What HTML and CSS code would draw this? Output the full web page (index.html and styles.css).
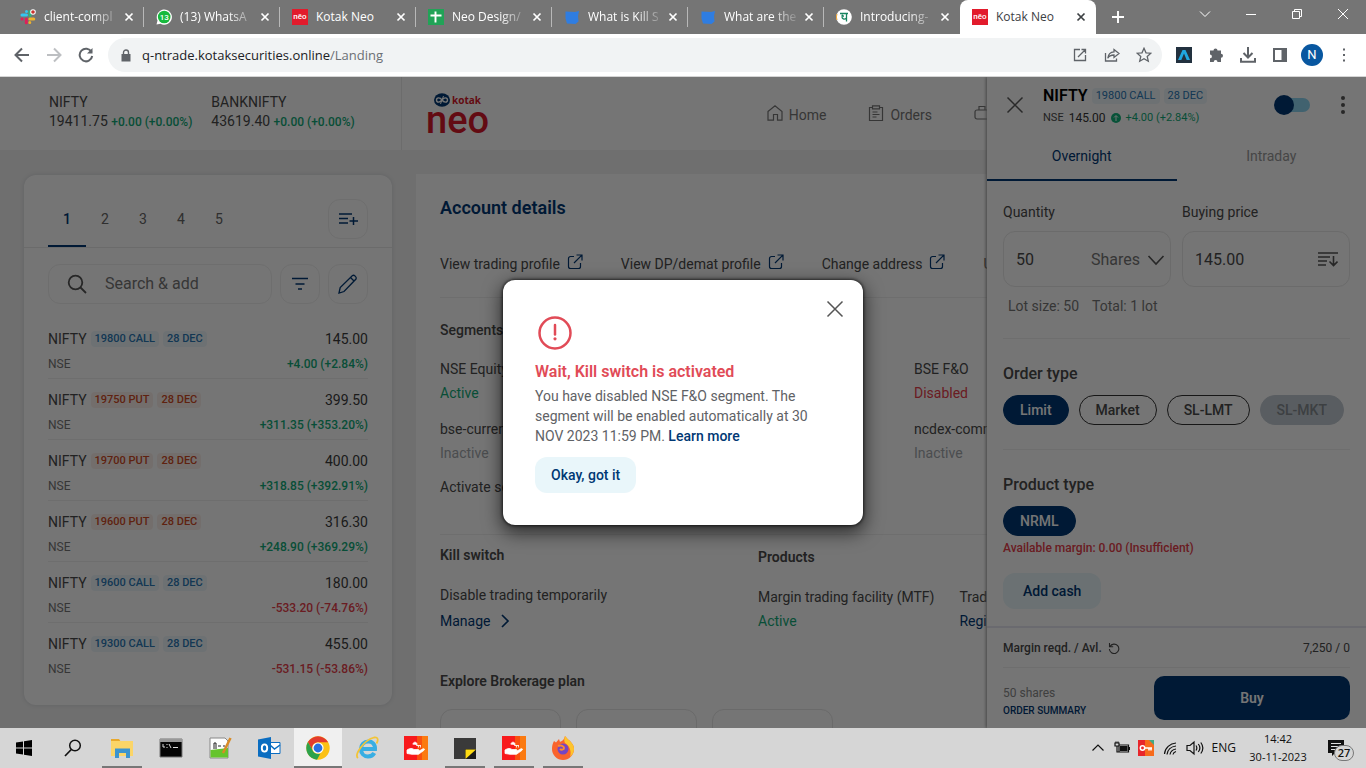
FILE: index.html
```html
<!DOCTYPE html>
<html lang="en">
<head>
<meta charset="utf-8">
<title>Kotak Neo</title>
<link rel="stylesheet" href="styles.css">
</head>
<body>
<svg class="defs" aria-hidden="true">
  <symbol id="x" viewBox="0 0 10 10"><path d="M1.5 1.5l7 7M8.500 1.500l-7 7" fill="none" stroke="currentColor" stroke-width="1.700"/></symbol>
  <symbol id="close" viewBox="0 0 18 18"><path d="M1.500 1.500l15 15M16.500 1.500l-15 15" fill="none" stroke="currentColor" stroke-width="1.500"/></symbol>
  <symbol id="ext" viewBox="0 0 16 16"><path d="M7 2.500H3.500a2 2 0 0 0-2 2v8a2 2 0 0 0 2 2h8a2 2 0 0 0 2-2V9M9.500 1H15v5.500M14.600 1.400L7 9" fill="none" stroke="currentColor" stroke-width="1.200"/></symbol>
  <symbol id="drop" viewBox="0 0 16 16"><path d="M1.500 2.500l9.500.5 4-1-1 5 .5 5.500-3 2.500-8.500-.5-1.500-5z" fill="#2f7de1"/></symbol>
  <symbol id="hand" viewBox="0 0 24 24"><path fill="#f8191c" d="M0 0h13v24H0z"/><path fill="#f9500f" d="M13 0h5v24h-5z"/><path fill="#fb7a10" d="M18 0h6v24h-6z"/><path d="M3 14c3-2 5-2 7-.5h4c1.500.2 1.300 1.500 0 1.800h-3.500 4l4.500-2.500c1.500-.5 2 .6 1 1.500l-5.500 4H8l-5-.8zM9 8.500a2 2 0 1 1 3.500 1H17M14.500 9.500v2M16.500 9.500v2" fill="#fff" stroke="#fff" stroke-width=".8"/></symbol>
</svg>

<header class="tabstrip">
  <div class="tab"><svg class="fav" viewBox="0 0 16 16"><g stroke-width="3" stroke-linecap="round"><path stroke="#36c5f0" d="M6.500 2.500v.1M2 6h4.500"/><path stroke="#2eb67d" d="M10 2.500v4"/><path stroke="#ecb22e" d="M9.800 10h4M9.800 13.500v.1"/><path stroke="#e01e5a" d="M2 10h.1M6.300 10v3.800"/></g><circle cx="13" cy="3" r="2.800" fill="#fff"/><circle cx="13" cy="3" r="1.800" fill="#c8322c"/></svg><span class="tab-title fade">client-compl</span><button class="tab-x" aria-label="Close tab"><svg><use href="#x"/></svg></button></div>
  <div class="tab"><svg class="fav" viewBox="0 0 16 16"><path d="M.5 15.500l1-4A7.600 7.600 0 1 1 4.500 14.700z" fill="#fff"/><circle cx="8.200" cy="8" r="6.300" fill="#17b93d"/><text x="8.200" y="10.800" class="wa">13</text></svg><span class="tab-title fade">(13) WhatsA</span><button class="tab-x" aria-label="Close tab"><svg><use href="#x"/></svg></button></div>
  <div class="tab"><span class="fav fav-neo">nēo</span><span class="tab-title">Kotak Neo</span><button class="tab-x" aria-label="Close tab"><svg><use href="#x"/></svg></button></div>
  <div class="tab"><svg class="fav" viewBox="0 0 16 16"><path fill="#21a357" d="M0 0h16v16H0z"/><path d="M7.500 2.500v11M2.500 6.500h11" stroke="#fff" stroke-width="1.900"/></svg><span class="tab-title fade">Neo Design/</span><button class="tab-x" aria-label="Close tab"><svg><use href="#x"/></svg></button></div>
  <div class="tab"><svg class="fav"><use href="#drop"/></svg><span class="tab-title fade">What is Kill S</span><button class="tab-x" aria-label="Close tab"><svg><use href="#x"/></svg></button></div>
  <div class="tab"><svg class="fav"><use href="#drop"/></svg><span class="tab-title fade">What are the</span><button class="tab-x" aria-label="Close tab"><svg><use href="#x"/></svg></button></div>
  <div class="tab"><svg class="fav" viewBox="0 0 16 16"><circle cx="8" cy="8" r="7.800" fill="#fff"/><path d="M1 5a7.500 7.500 0 0 0 0 6" fill="none" stroke="#f2a531"/><path d="M4 4.500h8M10.500 4.500v8M5.500 6.500c2-1 2.500 1.500.5 1.500 0 2.500 3 2.500 4.500 1" fill="none" stroke="#17835f" stroke-width="1.300"/></svg><span class="tab-title fade">Introducing-</span><button class="tab-x" aria-label="Close tab"><svg><use href="#x"/></svg></button></div>
  <div class="tab active"><span class="fav fav-neo">nēo</span><span class="tab-title">Kotak Neo</span><button class="tab-x" aria-label="Close tab"><svg><use href="#x"/></svg></button></div>
  <button class="newtab" aria-label="New tab"><svg viewBox="0 0 12 12"><path d="M6 0v12M0 6h12" stroke="currentColor" stroke-width="1.900"/></svg></button>
  <div class="winctl">
    <button aria-label="Search tabs"><svg viewBox="0 0 12 12"><path d="M1 3.500l5 5 5-5"/></svg></button>
    <button aria-label="Minimize"><svg viewBox="0 0 12 12"><path d="M1 6.500h10"/></svg></button>
    <button aria-label="Restore"><svg viewBox="0 0 12 12"><path d="M1.500 3.500h7v7h-7zM3.500 3.500v-2h7v7h-2"/></svg></button>
    <button aria-label="Close window"><svg viewBox="0 0 12 12"><path d="M1 1l10 10M11 1L1 11"/></svg></button>
  </div>
</header>

<div class="toolbar">
  <button aria-label="Back"><svg viewBox="0 0 16 16"><path d="M15 8H2M8 1.500L1.500 8 8 14.500"/></svg></button>
  <button aria-label="Forward" class="dim"><svg viewBox="0 0 16 16"><path d="M1 8h13M8 1.500L14.500 8 8 14.500"/></svg></button>
  <button aria-label="Reload"><svg viewBox="0 0 16 16"><path d="M13.500 5A6.300 6.300 0 1 0 14.200 9"/><path d="M14.500 1v5.500H9z" class="solid"/></svg></button>
  <div class="omnibox">
    <svg class="lock" viewBox="0 0 10 13"><path d="M.5 5h9v7.500h-9z" fill="#5f6368"/><path d="M2.500 5V3.500a2.500 2.500 0 0 1 5 0V5" fill="none" stroke="#5f6368" stroke-width="1.400"/></svg>
    <span class="url">q-ntrade.kotaksecurities.online<span class="path">/Landing</span></span>
    <button aria-label="Open in app"><svg viewBox="0 0 16 16" class="thin"><path d="M8 2.500H2.500v11h11V8M9.500 2.500h4v4M13.500 2.500L6 10"/></svg></button>
    <button aria-label="Share"><svg viewBox="0 0 16 16" class="thin"><path d="M1.500 6v8h11v-2.500M10 2.500L15 6.500 10 10.500V8C7 8 5 9 3.800 11.200 4.200 7.500 6.500 5 10 4.800z"/></svg></button>
    <button aria-label="Bookmark"><svg viewBox="0 0 16 16" class="thin"><path d="M8 1.300l2 4.500 4.900.4-3.700 3.200 1.100 4.800L8 11.700l-4.300 2.500 1.100-4.800L1.100 6.200 6 5.800z"/></svg></button>
  </div>
  <div class="exts">
    <button aria-label="Extension"><svg viewBox="0 0 16 16"><path class="nost" d="M0 0h16v16H0z" fill="#22313f"/><path class="nost" d="M6.500 3h3L14 13h-3.300L8 6.500 5.300 13H2z" fill="#20a7e0"/></svg></button>
    <button aria-label="Extensions"><svg viewBox="0 0 16 16"><path class="solid" d="M5.500 3.500a2 2 0 1 1 4 0h3.500v3.300a2 2 0 1 1 0 4V15H9.500a1.900 1.900 0 0 0-3.800 0H2v-3.700a1.900 1.900 0 0 0 0-3.800v-4z"/></svg></button>
    <button aria-label="Downloads"><svg viewBox="0 0 16 16"><path d="M8 0v10M3.500 6L8 10.500 12.500 6M1 11v3.800h14V11"/></svg></button>
    <button aria-label="Side panel"><svg viewBox="0 0 16 16"><path d="M2 2h12v12H2z"/><path class="solid" d="M9.500 2H14v12H9.500z"/></svg></button>
    <button class="avatar" aria-label="Profile">N</button>
    <button aria-label="Menu"><svg viewBox="0 0 16 16"><path class="solid" d="M7 1.500h2v2H7zM7 7h2v2H7zM7 12.500h2v2H7z"/></svg></button>
  </div>
</div>

<main class="app">
  <div class="topbar">
    <div class="tickers">
      <div class="ticker"><div>NIFTY</div><div>19411.75 <span class="chg up">+0.00 (+0.00%)</span></div></div>
      <div class="ticker"><div>BANKNIFTY</div><div>43619.40 <span class="chg up">+0.00 (+0.00%)</span></div></div>
    </div>
    <a class="brand" href="#" aria-label="Kotak Neo">
      <span class="brand-top"><svg viewBox="0 0 16 14"><ellipse cx="8" cy="7" rx="8" ry="6.700" fill="#003874"/><path d="M8 7C6 4 2.500 4.300 2.500 7S6 10 8 7s5.500-2.700 5.500 0S10 10 8 7z" fill="none" stroke="#fff" stroke-width="1.400"/><path d="M6.500 11l3-8" stroke="#fff"/></svg>kotak</span>
      <span class="brand-neo">neo</span>
    </a>
    <nav class="nav">
      <a href="#"><svg viewBox="0 0 16 16"><path d="M1 6.500L8 .8l7 5.700v8.700h-4.500V9.500h-4v5.700H1z"/></svg>Home</a>
      <a href="#"><svg viewBox="0 0 16 16"><path d="M4.500 2.500h-3v13h13v-13h-3M4.500.8h7v3h-7zM4.500 7h5M4.500 9.500h7M4.500 12h4"/></svg>Orders</a>
      <a href="#" aria-label="Portfolio"><svg viewBox="0 0 16 16"><path d="M3 5h10a2 2 0 0 1 2 2v5a2 2 0 0 1-2 2H3a2 2 0 0 1-2-2V7a2 2 0 0 1 2-2zM5 5V1.500h6V5"/></svg></a>
    </nav>
  </div>

  <div class="content">
    <section class="watch">
      <div class="wtabs">
        <button class="on">1</button><button>2</button><button>3</button><button>4</button><button>5</button>
        <button class="sq" aria-label="Add list"><svg viewBox="0 0 20 20"><path d="M1 5h13M1 9.500h9M1 14h9M15.500 8v8M11.500 12H20"/></svg></button>
      </div>
      <div class="wsearch">
        <label class="sbox"><svg viewBox="0 0 20 20"><circle cx="8.500" cy="8.500" r="6.800"/><path d="M13.500 13.500L19 19"/></svg><input type="text" placeholder="Search &amp; add" aria-label="Search and add"></label>
        <button class="sq" aria-label="Filter"><svg viewBox="0 0 20 20"><path d="M2 4.500h16M5.500 10h9M8 15h4"/></svg></button>
        <button class="sq" aria-label="Edit"><svg viewBox="0 0 20 20" class="pen"><path d="M1 19l1.200-5.500L14.500 1.500c1.500-1 4.500 1.500 3.500 3.500L6 17.500zM12.500 3.500l4 4"/></svg></button>
      </div>
      <ul class="rows">
        <li><span class="nm">NIFTY <b class="bd">19800 CALL</b><b class="bd">28 DEC</b></span><span class="pr">145.00</span><span class="ex">NSE</span><span class="chg up">+4.00 (+2.84%)</span></li>
        <li><span class="nm">NIFTY <b class="bd put">19750 PUT</b><b class="bd put">28 DEC</b></span><span class="pr">399.50</span><span class="ex">NSE</span><span class="chg up">+311.35 (+353.20%)</span></li>
        <li><span class="nm">NIFTY <b class="bd put">19700 PUT</b><b class="bd put">28 DEC</b></span><span class="pr">400.00</span><span class="ex">NSE</span><span class="chg up">+318.85 (+392.91%)</span></li>
        <li><span class="nm">NIFTY <b class="bd put">19600 PUT</b><b class="bd put">28 DEC</b></span><span class="pr">316.30</span><span class="ex">NSE</span><span class="chg up">+248.90 (+369.29%)</span></li>
        <li><span class="nm">NIFTY <b class="bd">19600 CALL</b><b class="bd">28 DEC</b></span><span class="pr">180.00</span><span class="ex">NSE</span><span class="chg down">-533.20 (-74.76%)</span></li>
        <li><span class="nm">NIFTY <b class="bd">19300 CALL</b><b class="bd">28 DEC</b></span><span class="pr">455.00</span><span class="ex">NSE</span><span class="chg down">-531.15 (-53.86%)</span></li>
      </ul>
    </section>

    <section class="account">
      <h1>Account details</h1>
      <div class="alinks">
        <a href="#">View trading profile<svg><use href="#ext"/></svg></a>
        <a href="#">View DP/demat profile<svg><use href="#ext"/></svg></a>
        <a href="#">Change address<svg><use href="#ext"/></svg></a>
        <a href="#">Update</a>
      </div>
      <div class="segments">
        <h2>Segments</h2>
        <div class="seggrid">
          <div><div>NSE Equity</div><div class="up">Active</div></div>
          <div class="c4"><div>BSE F&amp;O</div><div class="down">Disabled</div></div>
          <div><div>bse-currency</div><div class="off">Inactive</div></div>
          <div class="c4"><div>ncdex-comm</div><div class="off">Inactive</div></div>
        </div>
        <div class="act">Activate segments</div>
      </div>
      <div class="pair">
        <div class="kill"><h2>Kill switch</h2><div>Disable trading temporarily</div><a href="#" class="lnk">Manage<svg viewBox="0 0 10 14"><path d="M2 1l6 6-6 6" fill="none" stroke="currentColor" stroke-width="1.700"/></svg></a></div>
        <div class="prod"><h2>Products</h2><div class="plist"><div><div>Margin trading facility (MTF)</div><div class="up">Active</div></div><div><div>Trading</div><a href="#" class="lnk">Register</a></div></div></div>
      </div>
      <h2>Explore Brokerage plan</h2>
      <div class="plans"><div></div><div></div><div></div></div>
    </section>
  </div>

  <aside class="order">
    <div class="ohead">
      <button class="oclose" aria-label="Close order"><svg><use href="#close"/></svg></button>
      <div class="oinfo">
        <div class="oname">NIFTY <b class="bd">19800 CALL</b><b class="bd">28 DEC</b></div>
        <div class="oquote"><span>NSE</span><span class="oprice">145.00</span><svg viewBox="0 0 10 10"><circle cx="5" cy="5" r="5" fill="#10b37a"/><path d="M5 8V3M3 4.500l2-2 2 2" fill="none" stroke="#fff"/></svg><span class="up">+4.00 (+2.84%)</span></div>
      </div>
      <label class="toggle"><input type="checkbox" aria-label="Buy or sell"><span></span></label>
      <button class="dots" aria-label="More"><svg viewBox="0 0 4 20"><circle cx="2" cy="3" r="2"/><circle cx="2" cy="10" r="2"/><circle cx="2" cy="17" r="2"/></svg></button>
    </div>
    <div class="otabs"><button class="on">Overnight</button><button>Intraday</button></div>
    <div class="obody">
      <div class="fields">
        <div><label for="q">Quantity</label><div class="fbox"><input id="q" type="text" value="50"><select aria-label="Unit"><option>Shares</option></select><svg viewBox="0 0 18 18"><path d="M1.500 5L9 13l7.500-8"/></svg></div></div>
        <div><label for="p">Buying price</label><div class="fbox"><input id="p" type="text" value="145.00"><svg class="srt" viewBox="0 0 20 18"><path d="M0 2h20M0 6h12M0 10h9M0 14h8M15.500 5v9.500M11.500 10.500l4 4 4-4"/></svg></div></div>
      </div>
      <div class="lot"><span>Lot size: 50</span><span>Total: 1 lot</span></div>
      <div class="group">
        <h3>Order type</h3>
        <div class="pills"><button class="on">Limit</button><button>Market</button><button>SL-LMT</button><button class="na">SL-MKT</button></div>
      </div>
      <div class="group">
        <h3>Product type</h3>
        <div class="pills"><button class="on">NRML</button></div>
        <div class="warn">Available margin: 0.00 (Insufficient)</div>
        <button class="soft">Add cash</button>
      </div>
    </div>
    <div class="ofoot">
      <div class="mrow"><span class="mlabel">Margin reqd. / Avl.<svg viewBox="0 0 12 12"><path d="M2 4.500A4.700 4.700 0 1 1 1.400 7M1.500 1v3.700h3.700" fill="none" stroke="currentColor" stroke-width="1.100"/></svg></span><span>7,250 / 0</span></div>
      <div class="brow"><div><div class="sh">50 shares</div><a href="#" class="sum">ORDER SUMMARY</a></div><button class="buy">Buy</button></div>
    </div>
  </aside>

  <div class="scrim">
    <div class="dialog" role="dialog" aria-labelledby="dt">
      <button class="dclose" aria-label="Close"><svg><use href="#close"/></svg></button>
      <svg class="alert" viewBox="0 0 34 34"><circle cx="17" cy="17" r="15.500" fill="none" stroke="#e14b57" stroke-width="2.500"/><path d="M17 9v9.500" stroke="#e14b57" stroke-width="2.500" stroke-linecap="round"/><circle cx="17" cy="22.800" r="1.600" fill="#e14b57"/></svg>
      <h2 id="dt">Wait, Kill switch is activated</h2>
      <p>You have disabled NSE F&amp;O segment. The segment will be enabled automatically at 30 NOV 2023 11:59 PM. <a href="#">Learn more</a></p>
      <button class="soft">Okay, got it</button>
    </div>
  </div>
</main>

<footer class="taskbar">
  <button aria-label="Start"><svg viewBox="0 0 24 24"><path d="M4 6.500l7-1v6H4zM12 5.300l8-1.300v7.500h-8zM4 12.500h7v6l-7-1zM12 12.500h8V20l-8-1.300z"/></svg></button>
  <button aria-label="Search"><svg viewBox="0 0 24 24"><circle cx="14" cy="9.500" r="5.300" fill="none" stroke="#111" stroke-width="1.500"/><path d="M10.300 13.500L4 20" stroke="#111" stroke-width="1.700"/></svg></button>
  <button class="run" aria-label="File Explorer"><svg viewBox="0 0 24 24"><path fill="#e9a92c" d="M1 3h8l2 3H1z"/><path fill="#fbd568" d="M1 5h22v15H1z"/><path fill="#3d94cf" d="M5 12.500h15V22h-4v-5H9v5H5z"/></svg></button>
  <button aria-label="Command Prompt"><svg viewBox="0 0 24 24"><path d="M1 3h22v18H1z" fill="#050505" stroke="#777"/><path d="M1 3h22v3H1z" fill="#999"/><path d="M4 8v3h2M8 8v1M8 11v1M10 8l2 4M14 11.500h5" stroke="#ddd" fill="none"/></svg></button>
  <button aria-label="Notepad++"><svg viewBox="0 0 24 24"><path fill="#fdfdfd" stroke="#888" d="M2 2h15l3 3v17H2z"/><path fill="#65c42c" d="M2.500 14L20 12v9.500H2.500z"/><path d="M6 13V7h2v6M10 10h3M15 10h2" stroke="#222" fill="none"/><path d="M22.500 2L15 17" stroke="#d98b25" stroke-width="2.500"/></svg></button>
  <button aria-label="Outlook"><svg viewBox="0 0 24 24"><path fill="#fff" stroke="#0a6dc1" d="M12 6.500h11v11H12z"/><path d="M13 9l4.500 4L23 9" fill="none" stroke="#0a6dc1" stroke-width="1.500"/><path fill="#0a6dc1" d="M1 3.500L14 1v22L1 20.500z"/><ellipse cx="7.500" cy="12" rx="2.700" ry="3.600" fill="none" stroke="#fff" stroke-width="1.900"/></svg></button>
  <button class="run cur" aria-label="Chrome"><svg viewBox="0 0 24 24"><circle cx="12" cy="12" r="11.700" fill="#fbc116"/><path fill="#e33b2e" d="M1.900 6.100A11.700 11.700 0 0 1 22.100 6.200H12a5.900 5.900 0 0 0-5.200 8.700z"/><path fill="#2da24c" d="M1.900 6.100l5 8.800a5.900 5.900 0 0 0 7.500 2.500L11 23.700A11.700 11.700 0 0 1 1.900 6.100z"/><circle cx="12" cy="12" r="5.600" fill="#fff"/><circle cx="12" cy="12" r="4.400" fill="#2a6fe0"/></svg></button>
  <button aria-label="Internet Explorer"><svg viewBox="0 0 24 24"><path d="M6 13h14c.3-5-3-7.500-6.500-7.500C9 5.500 6 8.500 6 13s3 7.500 7 7.500c3 0 5-1.200 6.300-3.500" fill="none" stroke="#38aee3" stroke-width="4"/><path d="M3 22C-1 19 9 4 19 1.500c5-.8 4 3.500 2.500 6" fill="none" stroke="#f3c436" stroke-width="1.800"/></svg></button>
  <button aria-label="Remote"><svg><use href="#hand"/></svg></button>
  <button class="run" aria-label="Sticky Notes"><svg viewBox="0 0 24 24"><path fill="#3a3a3a" d="M1 2h22v21H1z"/><path fill="#1c1c1c" d="M12 13h11v10H12z"/><path fill="#ffdc12" d="M12.500 13.500H23L12.500 23z"/></svg></button>
  <button class="run" aria-label="Remote session"><svg><use href="#hand"/></svg></button>
  <button class="run" aria-label="Firefox"><svg viewBox="0 0 24 24"><path fill="#f9632d" d="M3 5l2 1.500L8 3l1 3c2-1 4-2 5-6 2 2 3 3.500 4.500 4.500C22 8 23 10 23 13a11 11 0 0 1-22 0c0-3 .5-5 2-8z"/><path fill="#fdc52d" d="M14 0c2 2 3 3.500 4.500 4.500C22 8 23 10 23 13c0 3-1.500 6-4 8 2-6-1-12-5-14-1-2-1-4 0-7z"/><circle cx="12" cy="13" r="5.500" fill="#7545c5"/><path d="M7 10c3-1 6 0 6 2s-3 2-4 1" fill="none" stroke="#fb8b30" stroke-width="2"/></svg></button>
  <div class="tray">
    <svg viewBox="0 0 16 16" class="ln"><path d="M2.500 10.500L8 5l5.500 5.500"/></svg>
    <svg viewBox="0 0 16 16" class="ln"><path d="M5 5h9.500v7H5zM15.500 7v3M1 3h4v3H1zM2 1.500V3M4 1.500V3M3 6v6h2"/><path d="M6.500 6.500H13v4H6.500z" fill="#111"/></svg>
    <svg viewBox="0 0 16 16"><path fill="#e8262b" d="M0 0h7v16H0z"/><path fill="#f76b1c" d="M7 0h9v16H7z"/><path fill="#41a984" d="M11 0h5v5z"/><circle cx="4.500" cy="8" r="2.200" fill="none" stroke="#fff" stroke-width="1.500"/><path d="M6.500 8H14M11 8v2.500M13 8v2.500" stroke="#fff" stroke-width="1.600"/></svg>
    <svg viewBox="0 0 16 16" class="ln"><path d="M2.500 14C3 8 8 3.500 14 3M5 14.500C5.500 10 9 6.500 14 6M8 14.500c.5-3 3-5 6-5.500M11 14.500c.3-1.500 1.500-2.500 3-3"/></svg>
    <svg viewBox="0 0 18 16" class="ln spk"><path d="M1 5.500h3L8 2v12L4 10.500H1zM10 5.500c1 1.500 1 3.500 0 5M12.300 4c2 2.500 2 5.500 0 8M14.800 2.500c2.600 3.500 2.600 7.500 0 11"/></svg>
    <span>ENG</span>
    <div class="clock"><div>14:42</div><div>30-11-2023</div></div>
    <div class="notif"><svg viewBox="0 0 16 16"><path d="M0 0h16v13H7l-3 3v-3H0z" fill="#111"/><path d="M3 3.500h10M3 6.500h10M3 9.500h6" stroke="#ddd"/></svg><span>27</span></div>
  </div>
</footer>
</body>
</html>
```
FILE: styles.css
```css
* { box-sizing: border-box; }
body { margin: 0; height: 100vh; display: flex; flex-direction: column; overflow: hidden; font: 14px/20px Roboto, sans-serif; color: #4a4a4a; }
button { font: inherit; color: inherit; border: 0; background: none; padding: 0; display: flex; align-items: center; justify-content: center; }
input, select { font: inherit; color: inherit; border: 0; background: none; padding: 0; min-width: 0; outline: 0; }
a { color: inherit; text-decoration: none; }
h1, h2, h3, p, ul { margin: 0; padding: 0; }
svg { flex: none; display: block; }
.defs { position: absolute; width: 0; height: 0; }

/* Browser tabs */
.tabstrip { height: 34px; flex: none; display: flex; background: #757575; padding-left: 8px; font: 12px/18px "Open Sans", sans-serif; color: #fff; }
.tab { width: 136px; display: flex; align-items: center; padding: 0 10px 0 12px; position: relative; }
.tab::after { content: ""; position: absolute; right: 0; top: 7px; height: 20px; width: 1px; background: #b8b8b8; }
.tab:nth-child(7)::after, .tab.active::after { display: none; }
.tab.active { background: #fff; color: #3c4043; border-radius: 8px 8px 0 0; }
.fav { width: 16px; height: 16px; flex: none; margin-right: 8px; fill: none; }
.fav-neo { background: #e21b2c; color: #fff; font: 500 8px/16px Roboto, sans-serif; text-align: center; }
.wa { font: 500 8px Roboto, sans-serif; fill: #fff; text-anchor: middle; }
.tab-title { flex: 1; white-space: nowrap; overflow: hidden; }
.fade { mask-image: linear-gradient(90deg, #000 65%, rgba(0, 0, 0, .1)); }
.tab-x { width: 10px; margin-left: 6px; }
.tab-x svg { width: 10px; height: 10px; }
.newtab { width: 44px; }
.newtab svg { width: 12px; height: 12px; }
.winctl { margin-left: auto; display: flex; height: 28px; }
.winctl button { width: 46px; }
.winctl svg { width: 12px; height: 12px; fill: none; stroke: #fff; }

/* Address bar */
.toolbar { height: 43px; flex: none; display: flex; align-items: center; background: #fff; border-bottom: 1px solid #d5d5d5; padding: 0 6px; }
.toolbar button { width: 32px; height: 32px; }
.toolbar svg { width: 16px; height: 16px; fill: none; stroke: #5f6368; stroke-width: 2; }
.toolbar .dim svg { stroke: #bdbfc2; }
.toolbar svg.thin { stroke-width: 1.300; }
.toolbar .solid { fill: #5f6368; stroke: none; }
.toolbar .nost { stroke: none; }
.omnibox { flex: 1; height: 34px; margin-left: 6px; border-radius: 17px; background: #f1f3f4; display: flex; align-items: center; padding: 0 2px 0 13px; }
.toolbar .lock { width: 10px; height: 13px; margin-right: 11px; stroke: none; }
.url { flex: 1; font: 13px/20px "Open Sans", sans-serif; color: #202124; }
.path { color: #6b6f74; }
.exts { display: flex; margin-left: 6px; }
.toolbar .avatar { width: 22px; height: 22px; margin: 5px; border-radius: 50%; background: #0857a0; color: #fff; font-size: 13px; }

/* Application */
.app { flex: 1; min-height: 0; position: relative; overflow: hidden; background: #f1f1f1; }
.topbar { height: 73px; display: flex; background: #fff; }
.tickers { width: 402px; display: flex; gap: 19px; padding: 16px 0 0 49px; border-right: 1px solid #ebebeb; line-height: 19px; white-space: nowrap; }
.chg { font-size: 12px; font-weight: 500; }
.up { color: #12ab78; }
.down { color: #e8404b; }
.off { color: #a3a8ad; }
.brand { display: flex; flex-direction: column; margin-left: 24px; padding-top: 16px; color: #d8182a; }
.brand-top { display: flex; gap: 2px; align-items: center; padding-left: 8px; font: bold 10px/14px "Open Sans", sans-serif; }
.brand-top svg { width: 16px; height: 14px; }
.brand-neo { font: 500 38px/26px Roboto, sans-serif; }
.nav { margin-left: auto; padding: 28px 376px 0 0; display: flex; gap: 42px; color: #777; }
.nav a { display: flex; align-items: flex-start; gap: 6px; }
.nav svg { width: 16px; height: 16px; fill: none; stroke: #777; stroke-width: 1.200; }
.content { display: flex; align-items: flex-start; gap: 24px; padding: 24px; }

/* Watchlist */
.watch { width: 368px; flex: none; margin-top: 1px; background: #fff; border-radius: 12px; box-shadow: 0 0 4px #d3d6da; padding-bottom: 21px; }
.wtabs { display: flex; padding: 16px 24px 0; border-bottom: 1px solid #e9e9e9; }
.wtabs > button:not(.sq) { width: 38px; height: 56px; border-bottom: 2px solid transparent; border-top: 2px solid transparent; color: #666; }
.wtabs > button.on { color: #003874; border-bottom-color: #003874; font-weight: 500; }
.sq { width: 40px; height: 40px; flex: none; border: 1px solid #f0f0f0; border-radius: 12px; color: #003874; }
.sq svg { width: 20px; height: 20px; fill: none; stroke: currentColor; stroke-width: 1.500; }
.sq svg.pen { stroke-width: 1.300; }
.wtabs .sq { margin: 8px 0 0 auto; }
.wsearch { display: flex; gap: 8px; padding: 16px 24px 14px; }
.sbox { flex: 1; min-width: 0; height: 40px; border: 1px solid #f0f0f0; border-radius: 12px; display: flex; align-items: center; gap: 18px; padding-left: 18px; font-size: 16px; }
.sbox svg { width: 20px; height: 20px; fill: none; stroke: #555; stroke-width: 1.800; }
.sbox input::placeholder { color: #777; opacity: 1; }
.rows { list-style: none; padding: 0 24px; }
.rows li { display: grid; grid-template-columns: 1fr auto; align-content: start; row-gap: 5px; height: 61px; padding-top: 11px; border-bottom: 1px solid #efefef; }
.rows li:last-child { border: 0; }
.rows .chg, .rows .pr { text-align: right; }
.nm { display: flex; align-items: center; gap: 4px; }
.pr { color: #3c3c3c; }
.ex { font-size: 12px; color: #777; }
.bd { font-size: 11px; line-height: 16px; font-weight: 500; color: #2a78b5; background: #eef7fb; border-radius: 4px; padding: 0 4px; }
.bd.put { color: #cf4a24; background: #fbf0ec; }

/* Account page */
.account { flex: 1; min-width: 0; background: #fff; padding: 24px 24px 0; height: 640px; }
h1 { font-size: 18px; line-height: 20px; font-weight: 600; color: #003874; }
h2 { font-size: 14px; line-height: 20px; font-weight: 600; }
.alinks { display: flex; gap: 38px; padding: 36px 0 23px; border-bottom: 1px solid #efefef; white-space: nowrap; }
.alinks a { display: flex; gap: 7px; }
.alinks svg { width: 16px; height: 16px; color: #003874; }
.segments { padding: 22px 0 37px; border-bottom: 1px solid #efefef; }
.segments h2 { font-weight: 500; }
.seggrid { display: grid; grid-template-columns: repeat(4, 158px); row-gap: 16px; padding: 19px 0 14px; }
.seggrid > div { display: grid; gap: 4px; grid-column: 1; }
.seggrid > .c4 { grid-column: 4; }
.pair { display: flex; padding: 10px 0 40px; }
.kill { width: 318px; }
.pair h2 { margin-bottom: 20px; }
.prod { padding-top: 2px; }
.plist { display: flex; gap: 25px; white-space: nowrap; }
.plist > div { display: grid; gap: 4px; }
.lnk { display: flex; align-items: center; gap: 10px; color: #003874; }
.kill .lnk { margin-top: 6px; }
.lnk svg { width: 10px; height: 14px; }
.plans { display: flex; gap: 15px; margin-top: 18px; }
.plans div { width: 121px; height: 100px; border: 1px solid #e6e6e6; border-radius: 12px; }

/* Order panel */
.order { position: absolute; top: 0; right: 0; bottom: 0; width: 379px; background: #fff; box-shadow: -1px 0 3px #9a9a9a; display: flex; flex-direction: column; }
.ohead { height: 54px; display: flex; padding: 9px 21px 0 19px; }
.oclose { width: 18px; height: 38px; color: #5a5a5a; }
.oclose svg, .dclose svg { width: 18px; height: 18px; }
.oinfo { margin-left: 19px; }
.oname { display: flex; align-items: center; gap: 4px; font-size: 16px; font-weight: 600; color: #000; }
.oname .bd { font-weight: 400; }
.oquote { display: flex; align-items: center; gap: 5px; margin-top: 4px; font-size: 11px; line-height: 16px; }
.oprice { font-size: 12px; color: #333; }
.oquote svg { width: 10px; height: 10px; }
.toggle { margin: 9px 31px 0 auto; width: 36px; height: 20px; position: relative; }
.toggle input { position: absolute; inset: 0; margin: 0; opacity: 0; }
.toggle span { display: block; margin: 3px 0 0 10px; height: 14px; border-radius: 7px; background: #8ed6f2; }
.toggle span::before { content: ""; position: absolute; left: 0; top: 0; width: 20px; height: 20px; border-radius: 50%; background: #003874; }
.dots { width: 4px; height: 38px; }
.dots svg { width: 4px; height: 20px; fill: #555; }
.otabs { display: flex; }
.otabs button { flex: 1; height: 50px; border: 2px solid transparent; border-width: 2px 0; color: #999; }
.otabs .on { color: #003874; border-bottom-color: #003874; }
.obody { flex: 1; min-height: 0; padding: 21px 16px 0; }
.fields { display: grid; grid-template-columns: 1fr 1fr; gap: 11px; }
.fields label { display: block; margin-bottom: 9px; }
.fbox { height: 56px; display: flex; align-items: center; border: 1px solid #e9e9e9; border-radius: 12px; padding: 2px 5px 0 12px; font-size: 16px; }
.fbox input { flex: 1; width: 0; }
.fbox select { appearance: none; color: #777; margin-right: 6px; }
.fbox svg { width: 18px; height: 18px; fill: none; stroke: #555; stroke-width: 1.600; }
.fbox .srt { width: 20px; margin-right: 6px; }
.lot { display: flex; gap: 13px; padding: 9px 5px 22px; color: #777; }
.group { border-top: 1px solid #efefef; padding: 24px 0; }
h3 { font-size: 16px; line-height: 22px; font-weight: 500; margin-bottom: 10px; }
.pills { display: flex; gap: 10px; }
.pills button { height: 30px; padding: 0 16px; border: 1px solid #333; border-radius: 15px; font-weight: 500; white-space: nowrap; }
.pills .on { background: #003874; border-color: #003874; color: #fff; }
.pills .na { background: #c3cbd3; border-color: #c3cbd3; color: #858b91; }
.warn { margin: 4px 0 17px; font-size: 12px; line-height: 16px; font-weight: 500; color: #e8404b; }
.soft { height: 36px; padding: 0 20px; border-radius: 12px; background: #e9f6fa; color: #003874; font-weight: 500; }
.ofoot { border-top: 2px solid #e6e8f1; padding: 0 16px; font-size: 12px; }
.mrow { height: 40px; display: flex; justify-content: space-between; align-items: center; border-bottom: 1px solid #efefef; }
.mlabel { display: flex; align-items: center; gap: 6px; font-weight: 500; }
.mlabel svg { width: 12px; height: 12px; }
.brow { height: 60px; display: flex; align-items: center; justify-content: space-between; line-height: 18px; }
.sh { color: #8a8a8a; margin-top: 8px; }
.sum { display: block; font-size: 10px; font-weight: 500; color: #003874; }
.buy { width: 196px; height: 44px; border-radius: 10px; background: #003874; color: #fff; font-size: 14px; font-weight: 600; }

/* Kill switch message */
.scrim { position: absolute; inset: 0; background: rgba(0, 0, 0, .54); display: flex; align-items: center; justify-content: center; }
.dialog { width: 360px; padding: 34px 32px 32px; position: relative; background: #fff; border-radius: 12px; box-shadow: 0 6px 18px 2px rgba(0, 0, 0, .6), 0 0 3px 1px rgba(0, 0, 0, .6); color: #5f6266; }
.dclose { position: absolute; right: 19px; top: 20px; color: #555; }
.alert { width: 34px; height: 34px; margin: 2px 0 12px 3px; }
.dialog h2 { font-size: 16px; line-height: 20px; color: #e14b57; margin-bottom: 4px; }
.dialog p { margin-bottom: 11px; }
.dialog a { color: #003874; font-weight: 500; }
.dialog .soft { padding: 0 16px; }

/* Windows taskbar */
.taskbar { height: 40px; flex: none; display: flex; gap: 1px; background: #d6d6d6; color: #111; font: 12px/18px "Open Sans", sans-serif; }
.taskbar > button { width: 48px; position: relative; }
.taskbar > button > svg { width: 24px; height: 24px; }
.run::after { content: ""; position: absolute; left: 4px; right: 4px; bottom: 0; height: 2px; background: #777; }
.cur { background: #f0f0f0; }
.cur::after { left: 0; right: 0; }
.tray { margin-left: auto; display: flex; align-items: center; gap: 8px; padding-right: 12px; }
.tray svg { width: 16px; height: 16px; }
.tray .spk { width: 18px; }
.ln { fill: none; stroke: #111; stroke-width: 1.200; }
.clock { width: 68px; text-align: center; font-size: 11px; }
.notif { position: relative; margin-left: 8px; width: 26px; }
.notif span { position: absolute; left: 6px; top: 5px; width: 20px; height: 16px; border-radius: 8px; border: 1px solid #777; background: #d6d6d6; font: 600 11px/14px "Open Sans", sans-serif; text-align: center; }
```
